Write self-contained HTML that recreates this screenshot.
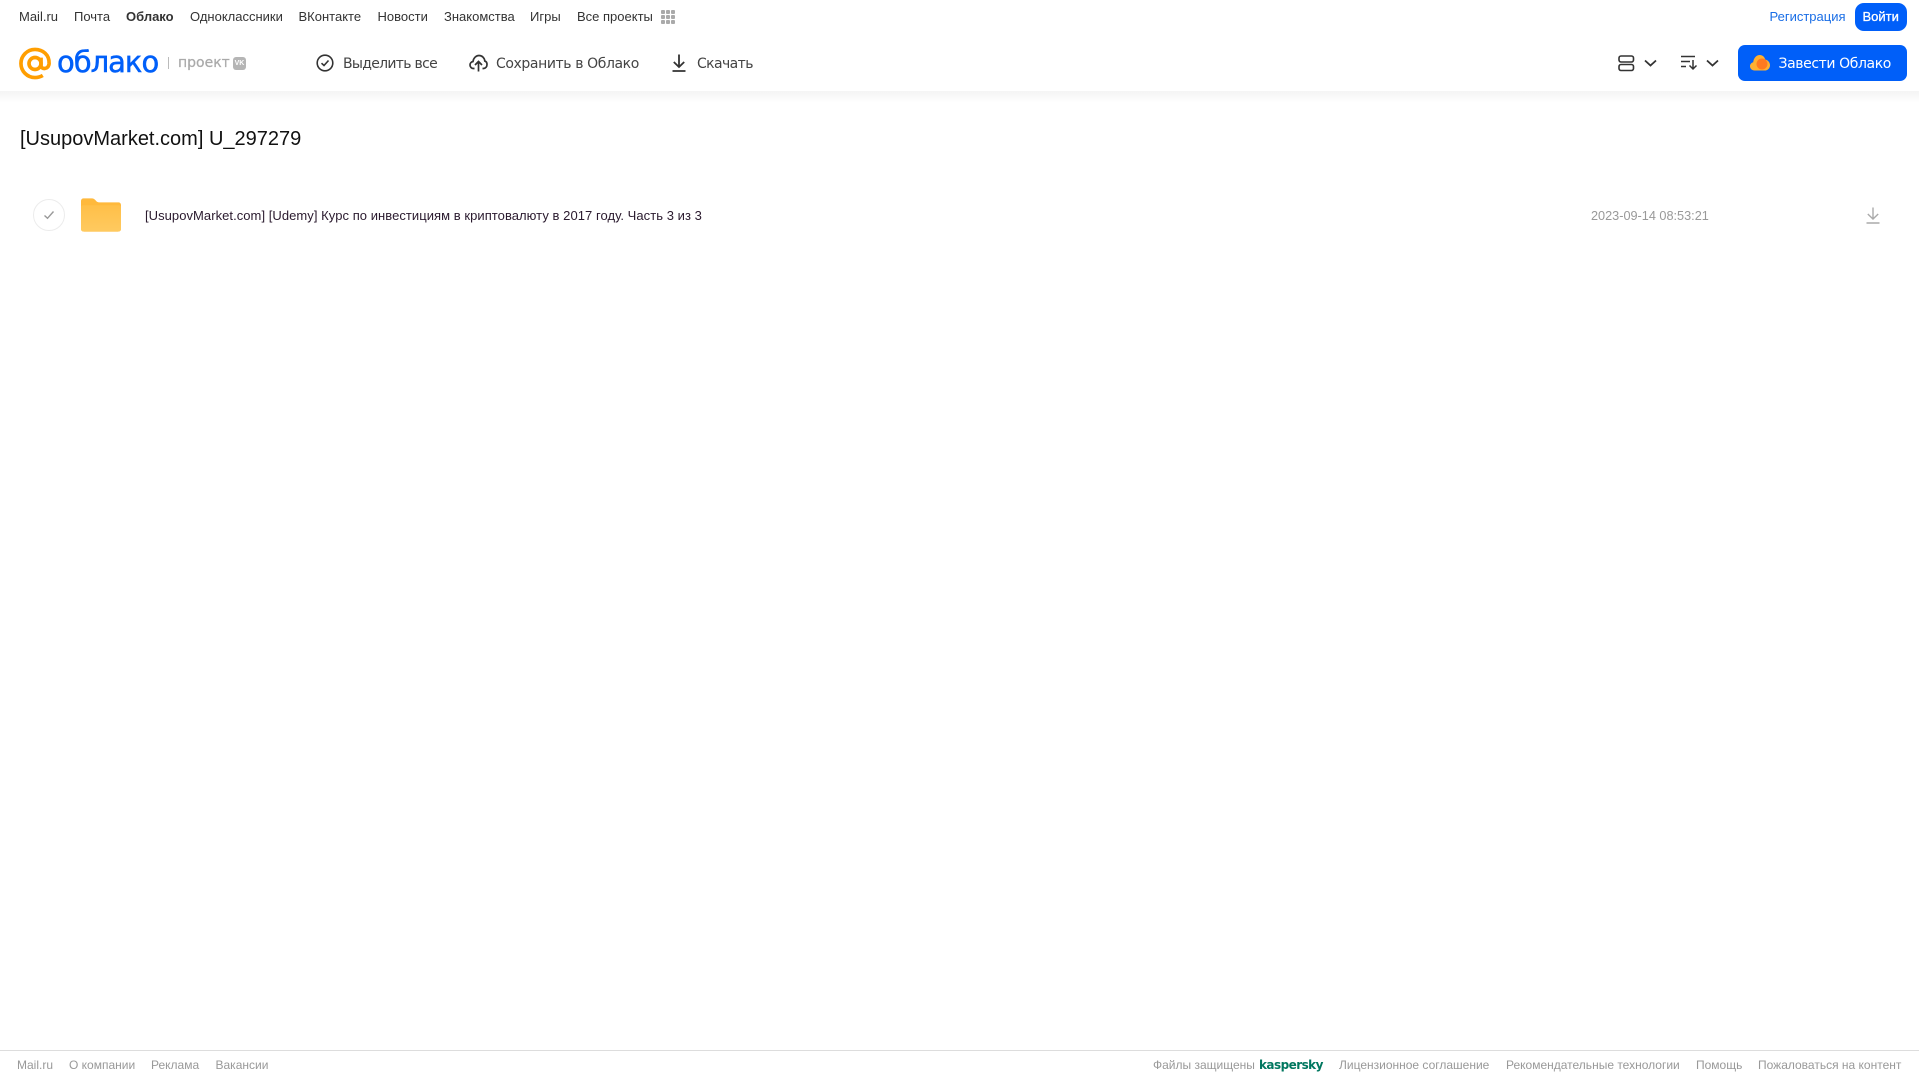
<!DOCTYPE html>
<html lang="ru"><head><meta charset="utf-8"><title>Облако</title>
<style>
html,body{margin:0;padding:0;background:#fff}
body{width:1919px;height:1079px;position:relative;overflow:hidden;font-family:"Liberation Sans",sans-serif}
.t{position:absolute;white-space:nowrap;line-height:18px}
.n{top:8px;font-size:13px;color:#333}
.b{top:55px;font-size:14px;color:#444;font-family:"DejaVu Sans",sans-serif}
.f{top:1056px;font-size:12px;color:#999}
svg{position:absolute;overflow:visible}
</style></head><body>
<div style="position:absolute;left:0;top:91px;width:1919px;height:12px;background:linear-gradient(#f4f4f4,#fff)"></div>

<span class="t n" style="left:19px">Mail.ru</span>
<span class="t n" style="left:74px">Почта</span>
<span class="t n" style="left:126px;font-weight:bold">Облако</span>
<span class="t n" style="left:190px">Одноклассники</span>
<span class="t n" style="left:298.500px">ВКонтакте</span>
<span class="t n" style="left:377.500px">Новости</span>
<span class="t n" style="left:444px">Знакомства</span>
<span class="t n" style="left:530px">Игры</span>
<span class="t n" style="left:577px">Все проекты</span>
<svg style="left:661px;top:10px" width="15" height="15" fill="#aaa"><rect x="0" y="0" width="4" height="4" rx="1"/><rect x="5" y="0" width="4" height="4" rx="1"/><rect x="10" y="0" width="4" height="4" rx="1"/><rect x="0" y="5" width="4" height="4" rx="1"/><rect x="5" y="5" width="4" height="4" rx="1"/><rect x="10" y="5" width="4" height="4" rx="1"/><rect x="0" y="10" width="4" height="4" rx="1"/><rect x="5" y="10" width="4" height="4" rx="1"/><rect x="10" y="10" width="4" height="4" rx="1"/></svg>

<span class="t n" style="left:1769.500px;color:#1a6ee6">Регистрация</span>
<div style="position:absolute;left:1855px;top:3px;width:52px;height:28px;border-radius:9px;background:#005ff9"></div>
<span class="t n" style="left:1862.500px;color:#fff;-webkit-text-stroke:.3px #fff">Войти</span>

<svg style="left:19px;top:47px" width="33" height="33" viewBox="0 0 34 33" fill="none" stroke="#ff9e00" stroke-width="3.800"><circle cx="16.500" cy="16.500" r="6.200"/><path d="M22.700 10.500V18.500C22.700 23 30.500 23 31 16.500 31.400 7.500 24.500 2 16.500 2 8.500 2 2 8.500 2 16.500 2 24.500 8.500 31 16.500 31 19.500 31 22 30.300 24.500 28.800"/></svg>
<span class="t" style="left:57px;top:44px;line-height:36px;font-size:29px;color:#005ff9;font-family:'DejaVu Sans',sans-serif;-webkit-text-stroke:.5px #005ff9;letter-spacing:-1px">облако</span>
<div style="position:absolute;left:168px;top:57px;width:1px;height:12px;background:#bbb"></div>
<span class="t" style="left:178px;top:54px;font-size:14px;color:#aaa;font-family:'DejaVu Sans',sans-serif;-webkit-text-stroke:.25px #aaa">проект</span>
<div style="position:absolute;left:233px;top:57px;width:13px;height:13px;border-radius:3px;background:#b5b5b5;color:#fff;font:bold 7px/13px 'Liberation Sans',sans-serif;text-align:center">VK</div>

<svg style="left:316px;top:54px" width="18" height="18" viewBox="0 0 18 18" fill="none" stroke="#333" stroke-width="1.600"><circle cx="9" cy="9" r="7.800"/><path d="M5.500 9.200 8 11.500 12.500 6.500"/></svg>
<span class="t b" style="left:343px;letter-spacing:-.7px">Выделить все</span>
<svg style="left:469px;top:54px" width="19" height="18" viewBox="0 0 19 18" fill="none" stroke="#333" stroke-width="1.700"><path d="M5.500 14.500H4.500C2.500 14.500 1 13 1 11 1 9.200 2.300 7.800 4 7.500 4.500 4 7 1.500 10 1.500 13.200 1.500 15.500 4 15.800 7 17.500 7.500 18 9.200 18 10.500 18 12.800 16.500 14.500 14.500 14.500H13.500"/><path d="M9.500 17.500V8M6 11 9.500 7.500 13 11"/></svg>
<span class="t b" style="left:496px;letter-spacing:-.4px">Сохранить в Облако</span>
<svg style="left:672px;top:54px" width="14" height="18" viewBox="0 0 14 18" fill="none" stroke="#333" stroke-width="1.800"><path d="M7 0.500V13M1.800 8 7 13 12.200 8M0.500 17H13.500"/></svg>
<span class="t b" style="left:697px;letter-spacing:-.6px">Скачать</span>

<svg style="left:1618px;top:55px" width="17" height="17" viewBox="0 0 17 17" fill="none" stroke="#333" stroke-width="1.600"><rect x="1" y="1" width="14.500" height="6" rx="2"/><rect x="1" y="9.500" width="14.500" height="6" rx="2"/></svg>
<svg style="left:1644px;top:59px" width="13" height="8" viewBox="0 0 13 8" fill="none" stroke="#333" stroke-width="1.800"><path d="M1 1.500 6.500 6.500 12 1.500"/></svg>
<svg style="left:1681px;top:55px" width="17" height="16" viewBox="0 0 17 16" fill="none" stroke="#333" stroke-width="1.500"><path d="M0 1.500H14M0 6.500H9M0 11.500H5M12 5V14M8.500 10.500 12 14 15.500 10.500"/></svg>
<svg style="left:1706px;top:59px" width="13" height="8" viewBox="0 0 13 8" fill="none" stroke="#333" stroke-width="1.800"><path d="M1 1.500 6.500 6.500 12 1.500"/></svg>

<div style="position:absolute;left:1738px;top:45px;width:169px;height:36px;border-radius:7px;background:#005ff9"></div>
<svg style="left:1750px;top:54px" width="20" height="17" viewBox="0 0 20 17"><path d="M4.500 16.500C2 16.500 0 14.700 0 12.300 0 10.300 1.300 8.800 3.200 8.300 3.600 4 6.500 1 9.800 1 12.500 1 14.500 2.800 15.200 5.500 17.800 6 20 8.300 20 11.200 20 14.200 17.700 16.500 14.800 16.500Z" fill="#ffb030"/><circle cx="12" cy="10" r="5.500" fill="#ff7a20"/></svg>
<span class="t b" style="left:1778.500px;color:#fff;letter-spacing:-.4px">Завести Облако</span>

<span class="t" style="left:20px;top:125px;line-height:28px;font-size:20px;color:#111">[UsupovMarket.com] U_297279</span>

<div style="position:absolute;left:33px;top:199px;width:30px;height:30px;border:1px solid #ececec;border-radius:50%"></div>
<svg style="left:43px;top:210px" width="12" height="10" viewBox="0 0 12 10" fill="none" stroke="#999" stroke-width="1.400"><path d="M1.500 5.500 4.500 8.300 10.500 1.500"/></svg>
<svg style="left:81px;top:198px" width="40" height="34" viewBox="0 0 41 34"><defs><linearGradient id="g" x1="0" y1="0" x2="0" y2="1"><stop offset="0" stop-color="#ffbf48"/><stop offset="1" stop-color="#ffca60"/></linearGradient></defs><path d="M0 3C0 1 1 0 3 0H11C13 0 14 1 15 2 16 3.500 17 4 19 4H38C40 4 41 5 41 7V31C41 33 40 34 38 34H3C1 34 0 33 0 31Z" fill="#ffb93c"/><path d="M0 9C0 7.500 1 7 2 7H39C40 7 41 7.500 41 9V31C41 33 40 34 38 34H3C1 34 0 33 0 31Z" fill="url(#g)"/></svg>
<span class="t" style="left:145px;top:207px;font-size:13px;letter-spacing:.05px;color:#2a1a2e">[UsupovMarket.com] [Udemy] Курс по инвестициям в криптовалюту в 2017 году. Часть 3 из 3</span>
<span class="t" style="left:1591px;top:207px;font-size:12.700px;color:#999">2023-09-14 08:53:21</span>
<svg style="left:1866px;top:207px" width="14" height="17" viewBox="0 0 14 17" fill="none" stroke="#aaa" stroke-width="1.400"><path d="M7 0.500V12M1.800 7 7 12 12.200 7M0.500 16H13.500"/></svg>

<div style="position:absolute;left:0;top:1050px;width:1919px;height:1px;background:#ddd"></div>
<span class="t f" style="left:17px">Mail.ru</span>
<span class="t f" style="left:69px">О компании</span>
<span class="t f" style="left:151px">Реклама</span>
<span class="t f" style="left:215.500px">Вакансии</span>
<span class="t f" style="left:1153px">Файлы защищены</span>
<span class="t f" style="left:1259px;top:1056px;color:#00775f;font-weight:bold;font-size:12px;font-family:'DejaVu Sans',sans-serif;letter-spacing:-.55px">kaspersky</span>
<span class="t f" style="left:1339px">Лицензионное соглашение</span>
<span class="t f" style="left:1506px">Рекомендательные технологии</span>
<span class="t f" style="left:1696px">Помощь</span>
<span class="t f" style="left:1758px">Пожаловаться на контент</span>
</body></html>
